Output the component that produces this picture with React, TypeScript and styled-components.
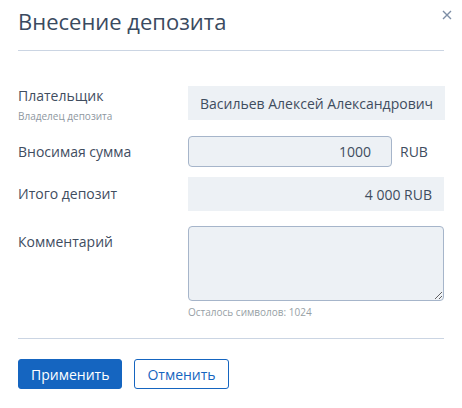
import styled, { createGlobalStyle } from "styled-components";

const GlobalStyle = createGlobalStyle`
  body {
    margin: 0;
    background: #ffffff;
    font-family: "Open Sans", "Noto Sans", sans-serif;
  }
`;

const Dialog = styled.div`
  position: relative;
  width: 462px;
  height: 408px;
  box-sizing: border-box;
  padding: 0 18px;
  background: #fff;
`;

const Header = styled.div`
  height: 51px;
  border-bottom: 1px solid #cbd5e3;
  box-sizing: border-box;
  padding-top: 6px;
`;

const Title = styled.h1`
  margin: 0;
  font-size: 22px;
  font-weight: 400;
  line-height: 30px;
  color: #3a4a60;
`;

const Close = styled.button`
  position: absolute;
  top: 8px;
  right: 8px;
  width: 14px;
  height: 14px;
  padding: 0;
  border: 0;
  background: none;
  display: flex;
  align-items: center;
  justify-content: center;
`;

const Form = styled.div`
  padding-top: 35px;
  padding-bottom: 19px;
  border-bottom: 1px solid #cbd5e3;
`;

const Row = styled.div<{ $mt: number }>`
  display: grid;
  grid-template-columns: 170px 1fr;
  margin-top: ${(p) => p.$mt}px;
`;

const LabelCol = styled.div<{ $pt: number }>`
  padding-top: ${(p) => p.$pt}px;
`;

const Label = styled.div`
  font-size: 14px;
  line-height: 20px;
  color: #3f4d5f;
`;

const SubLabel = styled.div`
  font-size: 10px;
  line-height: 14px;
  margin-top: 3px;
  color: #8e979f;
`;

const StaticField = styled.div<{ $align?: string }>`
  height: 34px;
  box-sizing: border-box;
  padding: 0 12px;
  background: #edf1f5;
  display: flex;
  align-items: center;
  justify-content: ${(p) => p.$align || "flex-start"};
  font-size: 14px;
  color: #3f4d5f;
  white-space: nowrap;
`;

const AmountWrap = styled.div`
  display: flex;
  align-items: center;
  gap: 8px;
`;

const AmountInput = styled.input`
  width: 204px;
  height: 31px;
  box-sizing: border-box;
  padding: 0 20px 0 12px;
  border: 1px solid #a6b5ca;
  border-radius: 4px;
  background: #edf1f5;
  text-align: right;
  font-family: inherit;
  font-size: 14px;
  color: #3f4d5f;
  outline: none;
`;

const Currency = styled.span`
  font-size: 14px;
  color: #3f4d5f;
`;

const Comment = styled.textarea`
  display: block;
  width: 100%;
  height: 75px;
  box-sizing: border-box;
  border: 1px solid #a6b5ca;
  border-radius: 4px;
  background: #edf1f5;
  font-family: inherit;
  font-size: 14px;
  outline: none;
  resize: vertical;
`;

const Counter = styled.div`
  margin-top: 4px;
  font-size: 10px;
  line-height: 14px;
  color: #979fa6;
`;

const Footer = styled.div`
  display: flex;
  gap: 12px;
  padding-top: 20px;
`;

const Button = styled.button<{ $primary?: boolean }>`
  height: 30px;
  padding: 0 12px;
  border-radius: 3px;
  border: 1px solid #1565c0;
  background: ${(p) => (p.$primary ? "#1565c0" : "#fff")};
  color: ${(p) => (p.$primary ? "#fff" : "#1565c0")};
  font-family: inherit;
  font-size: 14px;
  cursor: pointer;
`;

export default function App() {
  return (
    <>
      <GlobalStyle />
      <Dialog>
        <Header>
          <Title>Внесение депозита</Title>
        </Header>
        <Close aria-label="Закрыть">
          <svg width="10" height="10" viewBox="0 0 10 10">
            <path d="M1 1L9 9M9 1L1 9" stroke="#7d8ea6" strokeWidth="1.4" />
          </svg>
        </Close>
        <Form>
          <Row $mt={0}>
            <LabelCol $pt={0}>
              <Label>Плательщик</Label>
              <SubLabel>Владелец депозита</SubLabel>
            </LabelCol>
            <StaticField>Васильев Алексей Александрович</StaticField>
          </Row>
          <Row $mt={13}>
            <LabelCol $pt={6}>
              <Label>Вносимая сумма</Label>
            </LabelCol>
            <AmountWrap>
              <AmountInput defaultValue="1000" />
              <Currency>RUB</Currency>
            </AmountWrap>
          </Row>
          <Row $mt={10}>
            <LabelCol $pt={7}>
              <Label>Итого депозит</Label>
            </LabelCol>
            <StaticField $align="flex-end">4 000 RUB</StaticField>
          </Row>
          <Row $mt={15}>
            <LabelCol $pt={6}>
              <Label>Комментарий</Label>
            </LabelCol>
            <div>
              <Comment />
              <Counter>Осталось символов: 1024</Counter>
            </div>
          </Row>
        </Form>
        <Footer>
          <Button $primary>Применить</Button>
          <Button>Отменить</Button>
        </Footer>
      </Dialog>
    </>
  );
}
